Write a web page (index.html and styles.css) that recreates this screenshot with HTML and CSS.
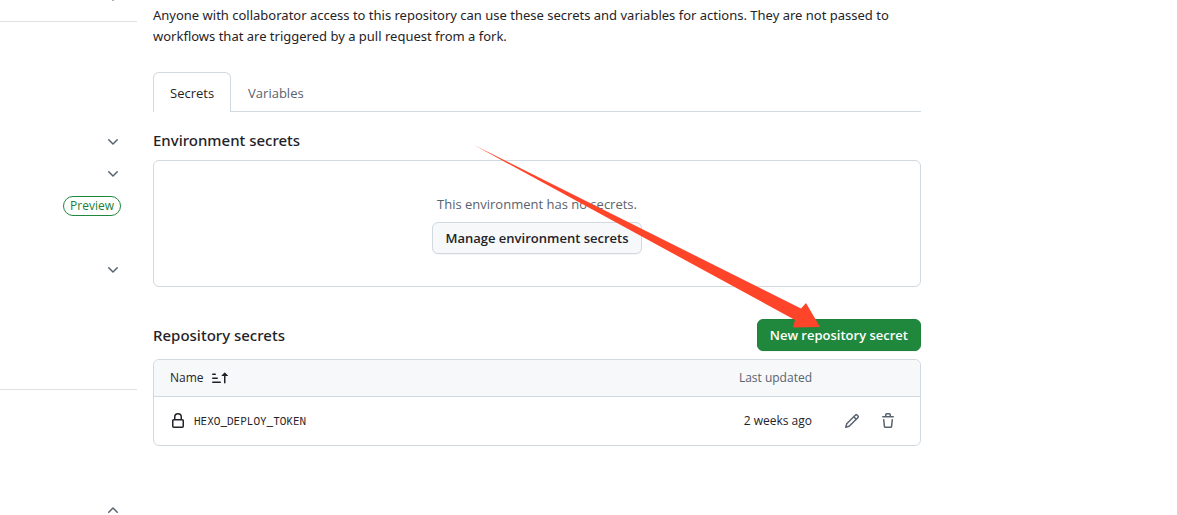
FILE: index.html
```html
<!DOCTYPE html>
<html lang="en">
<head>
<meta charset="utf-8">
<meta name="viewport" content="width=device-width, initial-scale=1">
<title>Actions secrets</title>
<link rel="stylesheet" href="styles.css">
</head>
<body>
<svg class="sprite" aria-hidden="true">
  <symbol id="chevron" viewBox="0 0 16 16"><path d="M12.78 5.22a.749.749 0 0 1 0 1.06l-4.25 4.25a.749.749 0 0 1-1.06 0L3.22 6.28a.749.749 0 1 1 1.06-1.06L8 8.939l3.72-3.719a.749.749 0 0 1 1.06 0Z"/></symbol>
</svg>
<div class="layout">
  <nav class="sidebar" aria-label="Settings">
    <div class="group group-first">
      <button class="nav-row" aria-label="Expand"><svg class="icon"><use href="#chevron"/></svg></button>
    </div>
    <div class="group group-code">
      <button class="nav-row" aria-label="Expand"><svg class="icon"><use href="#chevron"/></svg></button>
      <button class="nav-row" aria-label="Expand"><svg class="icon"><use href="#chevron"/></svg></button>
      <div class="nav-row"><span class="label">Preview</span></div>
      <div class="nav-row"></div>
      <button class="nav-row" aria-label="Expand"><svg class="icon"><use href="#chevron"/></svg></button>
    </div>
    <div class="group group-security">
      <button class="nav-row" aria-label="Collapse"><svg class="icon flip"><use href="#chevron"/></svg></button>
    </div>
  </nav>

  <main class="main">
    <p class="intro">Anyone with collaborator access to this repository can use these secrets and variables for actions. They are not passed to workflows that are triggered by a pull request from a fork.</p>

    <div class="tabs">
      <a class="tab tab-selected" href="#secrets" aria-current="page">Secrets</a>
      <a class="tab" href="#variables">Variables</a>
    </div>

    <section>
      <h2 class="heading">Environment secrets</h2>
      <div class="blank">
        <p class="blank-text">This environment has no secrets.</p>
        <button class="btn">Manage environment secrets</button>
      </div>
    </section>

    <section class="repository">
      <div class="subhead">
        <h2 class="heading">Repository secrets</h2>
        <button class="btn btn-primary">New repository secret</button>
      </div>
      <table class="table">
        <thead>
          <tr>
            <th class="col-name" scope="col">
              <button class="sort">Name
                <svg class="icon" viewBox="0 0 16 16" aria-hidden="true"><path d="m12.927 2.573 3 3A.25.25 0 0 1 15.75 6H13.5v6.75a.75.75 0 0 1-1.5 0V6H9.75a.25.25 0 0 1-.177-.427l3-3a.25.25 0 0 1 .354 0ZM0 12.25a.75.75 0 0 1 .75-.75h7.5a.75.75 0 0 1 0 1.5H.75a.75.75 0 0 1-.75-.75Zm0-4a.75.75 0 0 1 .75-.75h4.5a.75.75 0 0 1 0 1.5H.75A.75.75 0 0 1 0 8.25Zm0-4a.75.75 0 0 1 .75-.75h2.5a.75.75 0 0 1 0 1.5H.75A.75.75 0 0 1 0 4.25Z"/></svg>
              </button>
            </th>
            <th class="col-date" scope="col">Last updated</th>
            <th class="col-actions" aria-label="Actions"></th>
          </tr>
        </thead>
        <tbody>
          <tr>
            <td class="col-name">
              <div class="secret">
                <svg class="icon" viewBox="0 0 16 16" aria-hidden="true"><path d="M4 4a4 4 0 0 1 8 0v2h.25c.966 0 1.75.784 1.75 1.75v5.5A1.75 1.75 0 0 1 12.25 15h-8.5A1.75 1.75 0 0 1 2 13.25v-5.5C2 6.784 2.784 6 3.75 6H4Zm8.25 3.5h-8.5a.25.25 0 0 0-.25.25v5.5c0 .138.112.25.25.25h8.5a.25.25 0 0 0 .25-.25v-5.5a.25.25 0 0 0-.25-.25ZM10.5 6V4a2.5 2.5 0 1 0-5 0v2Z"/></svg>
                <code class="secret-name">HEXO_DEPLOY_TOKEN</code>
              </div>
            </td>
            <td class="col-date">2 weeks ago</td>
            <td class="col-actions">
              <div class="actions">
                <button class="icon-btn" aria-label="Edit secret"><svg class="icon" viewBox="0 0 16 16"><path d="M11.013 1.427a1.75 1.75 0 0 1 2.474 0l1.086 1.086a1.75 1.75 0 0 1 0 2.474l-8.61 8.61c-.21.21-.47.364-.756.445l-3.251.93a.75.75 0 0 1-.927-.928l.929-3.25c.081-.286.235-.547.445-.758l8.61-8.61Zm.176 4.823L9.75 4.81l-6.286 6.287a.253.253 0 0 0-.064.108l-.558 1.953 1.953-.558a.253.253 0 0 0 .108-.064Zm1.238-3.763a.25.25 0 0 0-.354 0L10.811 3.75l1.439 1.44 1.263-1.263a.25.25 0 0 0 0-.354Z"/></svg></button>
                <button class="icon-btn" aria-label="Delete secret"><svg class="icon" viewBox="0 0 16 16"><path d="M11 1.75V3h2.25a.75.75 0 0 1 0 1.5H2.75a.75.75 0 0 1 0-1.5H5V1.75C5 .784 5.784 0 6.75 0h2.5C10.216 0 11 .784 11 1.75ZM4.496 6.675l.66 6.6a.25.25 0 0 0 .249.225h5.19a.25.25 0 0 0 .249-.225l.66-6.6a.75.75 0 0 1 1.492.149l-.66 6.6A1.748 1.748 0 0 1 10.595 15h-5.19a1.75 1.75 0 0 1-1.741-1.575l-.66-6.6a.75.75 0 1 1 1.492-.15ZM6.5 1.75V3h3V1.75a.25.25 0 0 0-.25-.25h-2.5a.25.25 0 0 0-.25.25Z"/></svg></button>
              </div>
            </td>
          </tr>
        </tbody>
      </table>
    </section>

    <svg class="arrow" viewBox="0 0 346 183" aria-hidden="true"><path d="M0 0 327 163.500 332 158 346 182 319 182.500 321 175Z"/></svg>
  </main>
</div>
</body>
</html>
```
FILE: styles.css
```css
* {
  box-sizing: border-box;
}

body {
  margin: 0;
  background: #fff;
  color: #1f2328;
  font: 13px/21px "Open Sans", "Noto Sans", sans-serif;
}

button {
  margin: 0;
  padding: 0;
  border: 0;
  background: none;
  color: inherit;
  font: inherit;
  cursor: pointer;
}

p,
h2 {
  margin: 0;
}

.sprite {
  position: absolute;
  width: 0;
  height: 0;
}

.icon {
  display: block;
  flex: none;
  width: 16px;
  height: 16px;
  fill: currentColor;
}

.flip {
  transform: rotate(180deg);
}

.layout {
  display: flex;
  gap: 16px;
  height: 100vh;
  overflow: hidden;
}

/* Sidebar */
.sidebar {
  flex: 0 0 137px;
  color: #59636e;
}

.group-first {
  margin-top: -18px;
  padding-bottom: 7px;
}

.group-code {
  padding: 104px 0 103px;
  border-top: 1px solid #dfe2e5;
}

.group-security {
  padding-top: 104px;
  border-top: 1px solid #dfe2e5;
}

.nav-row {
  display: flex;
  align-items: center;
  justify-content: flex-end;
  width: 100%;
  height: 32px;
  padding-right: 16px;
}

.label {
  padding: 0 6px;
  border: 1px solid #1f883d;
  border-radius: 20px;
  color: #1a7f37;
  font-size: 12px;
  font-weight: 500;
  line-height: 18px;
}

/* Main column */
.main {
  position: relative;
  flex: 0 1 768px;
  min-width: 0;
  padding-top: 5px;
}

.intro {
  font-family: "Noto Sans", "Open Sans", sans-serif;
}

.tabs {
  display: flex;
  margin: 25px 0 16px;
  border-bottom: 1px solid #d1d9e0;
}

.tab {
  padding: 10px 16px 7px;
  border: 1px solid transparent;
  border-bottom: 0;
  color: #59636e;
  text-decoration: none;
}

.tab-selected {
  margin-bottom: -1px;
  padding: 10px 16px 8px;
  border-color: #d1d9e0;
  border-radius: 6px 6px 0 0;
  background: #fff;
  color: #1f2328;
}

.heading {
  font-family: "Noto Sans", "Open Sans", sans-serif;
  font-size: 15px;
  font-weight: 500;
  line-height: 24px;
}

.blank {
  display: flex;
  flex-direction: column;
  align-items: center;
  gap: 6px;
  margin-top: 8px;
  padding: 32px;
  border: 1px solid #d1d9e0;
  border-radius: 6px;
}

.blank-text {
  color: #59636e;
  line-height: 23px;
}

.btn {
  height: 32px;
  padding: 0 12px;
  border: 1px solid #d1d9e0;
  border-radius: 6px;
  background: #f6f8fa;
  box-shadow: 0 1px 0 rgba(31, 35, 40, 0.04);
  font-weight: 600;
  white-space: nowrap;
}

.btn-primary {
  border-color: #1c8139;
  background: #1f883d;
  color: #fff;
}

.repository {
  margin-top: 32px;
}

.subhead {
  display: flex;
  align-items: center;
  justify-content: space-between;
  margin-bottom: 8px;
}

.table {
  width: 100%;
  border: 1px solid #d1d9e0;
  border-spacing: 0;
  border-radius: 6px;
  font-size: 12px;
  line-height: 20px;
}

.table th {
  padding: 8px 0;
  border-bottom: 1px solid #d1d9e0;
  background: #f6f8fa;
  font-weight: 500;
}

.table th:first-child {
  border-top-left-radius: 6px;
}

.table th:last-child {
  border-top-right-radius: 6px;
}

.table td {
  padding: 8px 0;
}

.table .col-name {
  padding-left: 16px;
  text-align: left;
}

.table .col-date {
  text-align: right;
}

.table th.col-date {
  color: #59636e;
}

.table .col-actions {
  width: 108px;
  padding-right: 16px;
}

.sort,
.secret {
  display: flex;
  align-items: center;
  gap: 8px;
}

.secret-name {
  font: 11px/20px "Noto Sans Mono", "DejaVu Sans Mono", monospace;
}

.actions {
  display: flex;
  justify-content: flex-end;
  gap: 4px;
}

.icon-btn {
  display: grid;
  place-items: center;
  width: 32px;
  height: 32px;
  color: #59636e;
}

/* Pointer drawn across the cards, ending on the primary button */
.arrow {
  position: absolute;
  top: 145px;
  left: 321px;
  width: 346px;
  height: 183px;
  fill: #ff4529;
  pointer-events: none;
}
```
